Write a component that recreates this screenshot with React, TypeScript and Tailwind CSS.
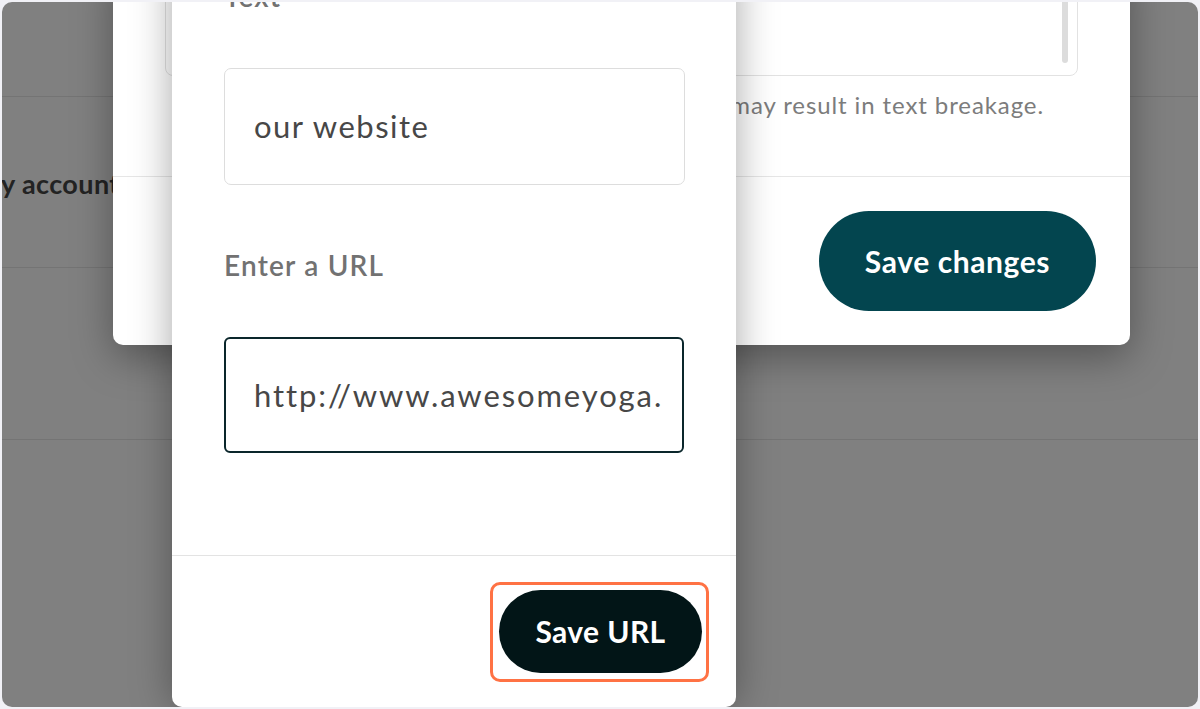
import React from 'react';

const font = { fontFamily: 'Lato, "Open Sans", sans-serif' };

function BackPage() {
  return (
    <div className="flex flex-col">
      <div className="h-[95px] border-b border-[#747474]" />
      <div className="h-[171px] border-b border-[#747474] flex items-center">
        <span className="mt-[4px] text-[27px] font-bold tracking-[0.4px] text-[#232323] -ml-[1px] whitespace-nowrap">y account</span>
      </div>
      <div className="h-[172px] border-b border-[#747474]" />
    </div>
  );
}

function EditModal() {
  return (
    <div className="absolute left-[111px] top-[-40px] w-[1017px] h-[383px] bg-white rounded-b-[10px] shadow-[0_12px_40px_rgba(0,0,0,0.35)] flex flex-col">
      <div className="px-[52px] pt-[14px]">
        <div className="relative h-[100px] border border-[#e2e2e2] rounded-[8px]">
          <div className="absolute right-[9px] top-[4px] w-[6px] h-[82px] rounded-full bg-[#dcdcdc]" />
        </div>
        <p className="mt-[14px] pr-[34px] text-right text-[24px] leading-[30px] tracking-[0.9px] text-[#7c7c7c] whitespace-nowrap">
          Using special characters may result in text breakage.
        </p>
      </div>
      <div className="mt-[56px] border-t border-[#e6e6e6] flex-1 flex items-center justify-end pr-[34px]">
        <button className="w-[277px] h-[100px] rounded-full bg-[#03454f] text-white text-[30px] font-bold tracking-[0.6px]">
          Save changes
        </button>
      </div>
    </div>
  );
}

function LinkModal() {
  return (
    <div className="absolute left-[170px] top-[-40px] bottom-0 w-[564px] bg-white rounded-b-[10px] shadow-[0_0_40px_rgba(0,0,0,0.35)] flex flex-col">
      <div className="px-[52px] pt-[16px]">
        <label className="block text-[28px] leading-[36px] font-semibold tracking-[1.2px] text-[#727272]">Text</label>
        <div className="mt-[54px] h-[117px] w-[461px] border-[1.5px] border-[#dddddd] rounded-[7px] flex items-center pl-[29px]">
          <span className="text-[31px] tracking-[1.5px] text-[#474747]">our website</span>
        </div>
        <label className="block mt-[62px] text-[28px] leading-[36px] font-semibold tracking-[1.2px] text-[#727272]">Enter a URL</label>
        <div className="mt-[54px] h-[116px] w-[460px] border-2 border-[#0a262b] rounded-[6px] flex items-center pl-[28px] overflow-hidden">
          <span className="text-[31px] tracking-[1.9px] text-[#474747] whitespace-nowrap">http://www.awesomeyoga.</span>
        </div>
      </div>
      <div className="mt-[102px] border-t border-[#e3e3e3] flex-1 flex items-center justify-end pr-[27px]">
        <div className="border-[3px] border-[#ff7244] rounded-[10px] pt-[5px] pb-[6px] pl-[6px] pr-[4px]">
          <button className="w-[203px] h-[83px] rounded-full bg-[#021517] text-white text-[30px] font-bold tracking-[0.4px]">
            Save URL
          </button>
        </div>
      </div>
    </div>
  );
}

export default function App() {
  return (
    <div className="w-[1200px] h-[709px] bg-[#f1f1f6] pt-[2px] pl-[2px]" style={font}>
      <div className="relative w-[1196px] h-[705px] rounded-[10px] overflow-hidden bg-[#808080]">
        <BackPage />
        <EditModal />
        <LinkModal />
      </div>
    </div>
  );
}
